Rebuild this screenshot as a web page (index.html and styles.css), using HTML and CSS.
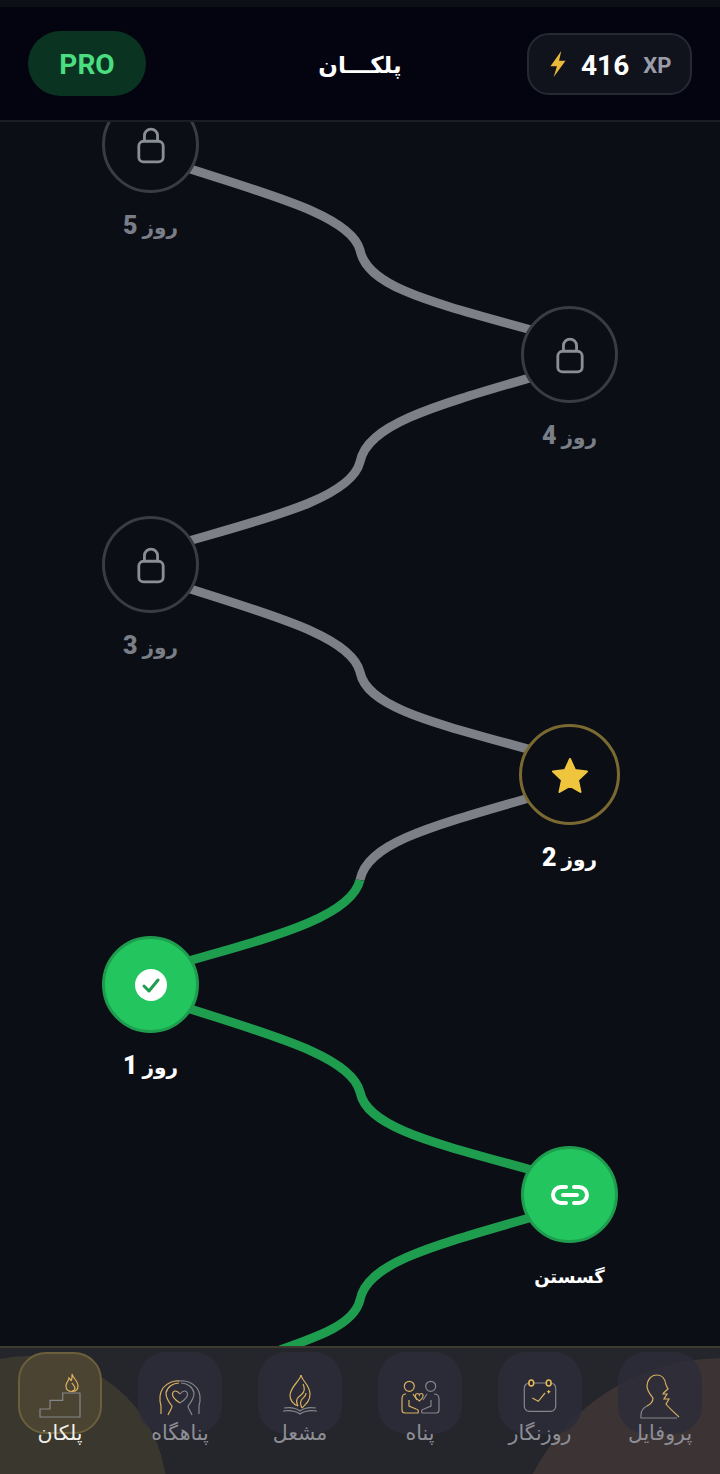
FILE: index.html
```html
<!doctype html>
<html lang="fa">
<head>
	<meta charset="UTF-8">
	<title>پلکان</title>
	<link rel="stylesheet" href="styles.css">
</head>
<body>
<div class="app">
	<div class="statusbar"></div>

	<header class="topbar">
		<div class="pro">PRO</div>
		<h1 class="title">پلکـــان</h1>
		<div class="xp">
			<svg class="bolt" viewBox="0 0 18 26"><path d="M12 1 2 15h6l-3 10 11-15h-6z"/></svg>
			<span class="xp-num">416</span>
			<span class="xp-unit">XP</span>
		</div>
	</header>

	<main class="road">
		<svg class="road-lines" viewBox="0 122 720 1224">
			<g class="gray">
				<path d="M151 156C250 190 350 212 360 250C368 292 450 306 570 341"/>
				<path d="M570 366C450 402 368 420 360 462C350 502 250 522 151 552"/>
				<path d="M151 576C250 610 350 632 360 672C368 712 450 726 570 761"/>
				<path d="M570 786C450 822 368 838 360 880"/>
			</g>
			<g class="green">
				<path d="M360 880C350 922 250 942 151 972"/>
				<path d="M151 996C250 1030 350 1052 360 1092C368 1132 450 1146 570 1181"/>
				<path d="M570 1206C450 1242 368 1258 360 1300C354 1324 320 1336 280 1350"/>
			</g>
		</svg>

		<div class="node left day5">
			<div class="circle locked"><svg class="lock" viewBox="0 0 32 40"><path d="M9 16V10a7 7 0 0 1 14 0v6"/><rect x="3" y="16" width="26" height="22" rx="5"/></svg></div>
			<div class="label dim">روز <b>5</b></div>
		</div>
		<div class="node right day4">
			<div class="circle locked"><svg class="lock" viewBox="0 0 32 40"><path d="M9 16V10a7 7 0 0 1 14 0v6"/><rect x="3" y="16" width="26" height="22" rx="5"/></svg></div>
			<div class="label dim">روز <b>4</b></div>
		</div>
		<div class="node left day3">
			<div class="circle locked"><svg class="lock" viewBox="0 0 32 40"><path d="M9 16V10a7 7 0 0 1 14 0v6"/><rect x="3" y="16" width="26" height="22" rx="5"/></svg></div>
			<div class="label dim">روز <b>3</b></div>
		</div>
		<div class="node right day2">
			<div class="circle current"><svg class="star" viewBox="0 0 40 40"><path d="M20 4l5 11 12 1.500-9 8.500 2.500 12L20 31l-10.500 6L12 25l-9-8.500L15 15z"/></svg></div>
			<div class="label">روز <b>2</b></div>
		</div>
		<div class="node left day1">
			<div class="circle done"><svg class="check" viewBox="0 0 32 32"><circle cx="16" cy="16" r="16"/><path d="M9 17l5 5 9-11"/></svg></div>
			<div class="label">روز <b>1</b></div>
		</div>
		<div class="node right day0">
			<div class="circle done"><svg class="link" viewBox="0 0 38 20"><path d="M15 2H10a8 8 0 0 0 0 16h5M23 2h5a8 8 0 0 1 0 16h-5M12 10h14"/></svg></div>
			<div class="label small">گسستن</div>
		</div>
	</main>

	<nav class="tabs">
		<div class="blob blob-left"></div>
		<div class="blob blob-right"></div>

		<div class="tab active">
			<div class="tile"><svg viewBox="0 0 60 60">
				<path class="g" d="M42 11C43 15 48 18 48 23C48 27 45 28.500 42 28.500C39 28.500 36 27 36 23C36 19 39 18 39 15C40 16 41 17 41 18C42 16 42.500 14 42 11Z"/>
				<path class="g" d="M42 20C43 22 45 23 45 25C45 27 44 28 42 28"/>
				<path class="s" d="M10 54V46H20V37.300H32.700V30H50V54Z"/>
			</svg></div>
			<span>پلکان</span>
		</div>
		<div class="tab">
			<div class="tile"><svg viewBox="0 0 60 60">
				<path class="g" d="M30 31C27 27 23 27 22.500 31C22 35 27 38 30 40"/>
				<path class="g" d="M30 18C24 17 17 20 13 25C9 31 9 36 11 43V51"/>
				<path class="g" d="M16 30C17 24 23 20 29 20M16 30C16 36 19 39 22 43C22 46 19 49 18 52"/>
				<path class="s" d="M30 31C33 27 37 27 37.500 31C38 35 33 38 30 40"/>
				<path class="s" d="M30 18C36 17 43 20 47 25C51 31 51 36 49 43V51"/>
				<path class="s" d="M44 30C43 24 37 20 31 20M44 30C44 36 41 39 38 43C38 46 41 49 42 52"/>
			</svg></div>
			<span>پناهگاه</span>
		</div>
		<div class="tab">
			<div class="tile"><svg viewBox="0 0 60 60">
				<path class="g" d="M31 12C32 18 40 22 40 31C40 38 36 41 32 45"/>
				<path class="g" d="M31 12C30 18 21 23 20 32C20 37 23 41 28 43"/>
				<path class="g" d="M33 21C35 25 35 29 31 32C27 35 25 37 28 43"/>
				<path class="g" d="M36 30C36 34 32 35 31 38C30 40 31 43 32 45"/>
				<path class="s" d="M14 45C20 44 26 45 30 48C34 45 40 44 46 45"/>
				<path class="s" d="M13 48C20 47 26 48 30 51C34 48 40 47 47 48"/>
			</svg></div>
			<span>مشعل</span>
		</div>
		<div class="tab">
			<div class="tile"><svg viewBox="0 0 60 60">
				<circle class="g" cx="19.300" cy="23.300" r="5"/>
				<circle class="s" cx="40.700" cy="23.300" r="5"/>
				<path class="g" d="M29.300 38C26 35.500 25 34 25.500 32C26 30 28.500 30 29.300 32C30 30 32.500 30 33 32C33.500 34 32.500 35.500 29.300 38Z"/>
				<path class="g" d="M16 31C13 31 12 33 12 36V47C12 49 13 50 15 50H28C29 48 28 46 26 46L19 43V37M23 31L27 37"/>
				<path class="s" d="M44 31C47 31 49 33 49 36V47C49 49 48 50 46 50H32C31 48 32 46 34 46L41 43V37M37 31L33 37"/>
			</svg></div>
			<span>پناه</span>
		</div>
		<div class="tab">
			<div class="tile"><svg viewBox="0 0 60 60">
				<rect class="s" x="14.300" y="20" width="31.400" height="28.300" rx="5"/>
				<ellipse class="peg" cx="21.300" cy="20" rx="2.400" ry="3"/>
				<ellipse class="peg" cx="38.700" cy="20" rx="2.400" ry="3"/>
				<path class="g" d="M22.300 35L28.300 38.300L35 30"/>
				<path class="spark" d="M38.700 26.500l.7 1.500 1.500.7-1.500.7-.7 1.500-.7-1.500-1.500-.7 1.500-.7z"/>
			</svg></div>
			<span>روزنگار</span>
		</div>
		<div class="tab">
			<div class="tile"><svg viewBox="0 0 60 60">
				<path class="g" d="M36 22C35 15 31 12 27 12C21 12 17 17 17 23C17 28 20 31 23 35C23 38 21 41 17 43"/>
				<path class="g" d="M36 22L38 26C36 28 34 29 33 31L37 31L34 36L39 36L36 41C39 45 44 49 49 54"/>
				<path class="s" d="M17 43C13 45 11 48 11 52V55H47"/>
			</svg></div>
			<span>پروفایل</span>
		</div>
	</nav>
</div>
</body>
</html>
```

FILE: styles.css
```css
*{
	box-sizing: border-box;
}
html,body{
	margin: 0;
	padding: 0;
	background: #0b0e15;
}
body{
	font-family: "Noto Sans", "DejaVu Sans", sans-serif;
}
.app{
	width: 720px;
	height: 1474px;
	display: flex;
	flex-direction: column;
	overflow: hidden;
}
.statusbar{
	height: 7px;
	background: #0d1017;
}

/* top bar */
.topbar{
	height: 115px;
	padding: 0 28px 0 28px;
	display: grid;
	grid-template-columns: 1fr auto 1fr;
	align-items: center;
	background: #03040f;
	border-bottom: 2px solid #1a1d26;
}
.pro{
	width: 118px;
	height: 65px;
	justify-self: start;
	border-radius: 33px;
	background: #0a3322;
	color: #4ade80;
	font-family: Roboto, sans-serif;
	font-weight: 700;
	font-size: 28px;
	line-height: 68px;
	text-align: center;
}
.title{
	margin: 0;
	color: #fff;
	font-size: 23px;
	font-weight: 700;
}
.xp{
	width: 165px;
	height: 62px;
	justify-self: end;
	display: flex;
	align-items: center;
	padding: 3px 0 0 19px;
	border: 2px solid #262934;
	border-radius: 22px;
	background: #10121c;
	font-family: Roboto, sans-serif;
	font-weight: 700;
}
.bolt{
	width: 20px;
	height: 28px;
	margin-top: -3px;
	fill: #e9b93c;
}
.xp-num{
	margin-left: 13px;
	color: #fff;
	font-size: 28px;
}
.xp-unit{
	margin-left: 14px;
	color: #9a9ca8;
	font-size: 22px;
}

/* the road */
.road{
	position: relative;
	flex: 1;
	overflow: hidden;
	background: #0b0e15;
}
.road-lines{
	position: absolute;
	left: 0;
	top: 0;
	width: 720px;
	height: 1224px;
	fill: none;
	stroke-width: 9;
}
.gray{
	stroke: #7e8087;
}
.green{
	stroke: #1f9d4f;
}
.node{
	position: absolute;
	width: 160px;
	display: flex;
	flex-direction: column;
	align-items: center;
}
.left{
	left: 70.5px;
}
.right{
	left: 489.5px;
}
.day5{
	top: -26px;
}
.day4{
	top: 184px;
}
.day3{
	top: 394px;
}
.day2{
	top: 602px;
}
.day1{
	top: 814px;
}
.day0{
	top: 1024px;
}
.circle{
	width: 97px;
	height: 97px;
	border-radius: 50%;
	display: flex;
	align-items: center;
	justify-content: center;
	background: #0b0e15;
}
.locked{
	border: 3px solid #3a3c44;
}
.current{
	width: 101px;
	height: 101px;
	border: 3px solid #7a6a32;
}
.done{
	background: #22c55e;
	border: 3px solid #1f9d4f;
}
.label{
	margin-top: 15px;
	height: 36px;
	line-height: 36px;
	color: #fff;
	font-size: 20px;
	font-weight: 700;
	white-space: nowrap;
}
.label b{
	font-family: Roboto, sans-serif;
	font-size: 25px;
}
.small{
	font-size: 18px;
}
.dim{
	color: #7a7e87;
}
.lock{
	width: 30px;
	height: 38px;
	fill: none;
	stroke: #8b8e96;
	stroke-width: 3;
}
.star{
	width: 40px;
	height: 40px;
	fill: #f0c53e;
	stroke: #f0c53e;
	stroke-width: 2;
	stroke-linejoin: round;
}
.check{
	width: 32px;
	height: 32px;
}
.check circle{
	fill: #fff;
}
.check path{
	fill: none;
	stroke: #1f9d4f;
	stroke-width: 3;
	stroke-linecap: round;
	stroke-linejoin: round;
}
.link{
	width: 38px;
	height: 20px;
	fill: none;
	stroke: #fff;
	stroke-width: 4;
	stroke-linecap: round;
}

/* bottom tabs */
.tabs{
	position: relative;
	height: 128px;
	display: grid;
	grid-template-columns: repeat(6, 120px);
	overflow: hidden;
	background: #24262c;
	border-top: 2px solid #3d3b30;
}
.blob{
	position: absolute;
	border-radius: 50%;
}
.blob-left{
	left: -111px;
	top: 8px;
	width: 278px;
	height: 278px;
	background: #3a372f;
}
.blob-right{
	left: 509px;
	top: 10px;
	width: 428px;
	height: 428px;
	background: #3b3334;
}
.tab{
	position: relative;
	display: flex;
	flex-direction: column;
	align-items: center;
	padding-top: 4px;
}
.tile{
	width: 84px;
	height: 82px;
	border-radius: 28px;
	display: flex;
	align-items: center;
	justify-content: center;
	background: rgba(44, 46, 58, .75);
}
.tile svg{
	width: 60px;
	height: 60px;
	fill: none;
	stroke-width: 1.2;
}
.active .tile{
	background: #4b4433;
	border: 2px solid #6b5f3c;
}
.tab span{
	margin-top: -18px;
	color: #8e8f96;
	font-size: 20.5px;
	line-height: 32px;
}
.active span{
	color: #f2f0ea;
}
.g{
	stroke: #d9b060;
}
.s{
	stroke: #85868c;
}
.peg{
	fill: #24262c;
	stroke: #e6bb5a;
	stroke-width: 1.6;
}
.spark{
	fill: #e6bb5a;
}
```
